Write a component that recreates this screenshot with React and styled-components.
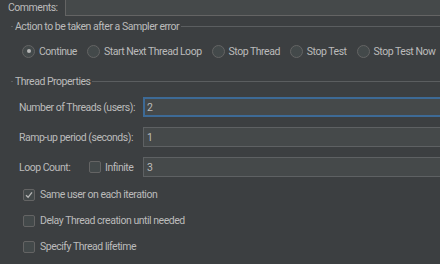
import React from "react";
import styled, { createGlobalStyle } from "styled-components";

const Global = createGlobalStyle`
  html, body { margin: 0; padding: 0; background: #3c3f41; }
  body {
    width: 440px;
    height: 264px;
    overflow: hidden;
    font-family: Roboto, "Noto Sans", sans-serif;
    font-size: 10.5px;
    letter-spacing: -0.48px;
    color: #bbbbbb;
  }
`;

const Page = styled.div`
  display: flex;
  flex-direction: column;
  width: 440px;
`;

const CommentsRow = styled.div`
  display: flex;
  align-items: center;
  height: 16px;
`;

const CommentsLabel = styled.span`
  width: 57px;
  padding-left: 8px;
  line-height: 14px;
`;

const CommentsBox = styled.div`
  flex: 1;
  align-self: flex-end;
  height: 17px;
  margin-top: -2px;
  background: #45494a;
  border: 1px solid #646464;
  border-right: none;
  box-sizing: border-box;
`;

const SectionHeader = styled.div`
  display: flex;
  align-items: center;
  height: 11px;
  margin-top: ${(p) => p.$top}px;
  padding-left: 11px;
`;

const Dash = styled.span`
  width: 2px;
  height: 1px;
  background: #5b5e60;
  margin-right: 2px;
`;

const SectionTitle = styled.span`
  line-height: 11px;
  white-space: nowrap;
  padding-right: 2px;
`;

const Line = styled.span`
  flex: 1;
  height: 1px;
  background: #5b5e60;
`;

const RadioRow = styled.div`
  display: flex;
  align-items: center;
  gap: 10px;
  height: 14px;
  margin-top: 12px;
  padding-left: 22px;
`;

const RadioItem = styled.label`
  display: flex;
  align-items: center;
  gap: 4px;
  white-space: nowrap;
`;

const RadioCircle = styled.span`
  width: 13px;
  height: 13px;
  box-sizing: border-box;
  border-radius: 50%;
  border: 1px solid #646464;
  background: #43494a;
  display: flex;
  align-items: center;
  justify-content: center;
  &::after {
    content: "";
    width: 4px;
    height: 4px;
    border-radius: 50%;
    background: ${(p) => (p.$checked ? "#b8b8b8" : "transparent")};
  }
`;

const Form = styled.div`
  display: flex;
  flex-direction: column;
  gap: 10px;
  margin-top: 10px;
  padding-left: 19px;
`;

const FormRow = styled.div`
  display: flex;
  align-items: center;
  height: 20px;
`;

const FieldLabel = styled.span`
  width: 124px;
  white-space: nowrap;
`;

const LoopLabel = styled.span`
  width: 70px;
  white-space: nowrap;
`;

const InlineCheck = styled.label`
  display: flex;
  align-items: center;
  gap: 4px;
  width: 54px;
`;

const Input = styled.div`
  flex: 1;
  height: 20px;
  box-sizing: border-box;
  background: #45494a;
  border: ${(p) => (p.$focused ? "2px solid #3d6a96" : "1px solid #5e6163")};
  border-right: none;
  padding-left: ${(p) => (p.$focused ? 2 : 3)}px;
  display: flex;
  align-items: center;
`;

const CheckList = styled.div`
  display: flex;
  flex-direction: column;
  gap: 13px;
  margin-top: 11px;
  padding-left: 23px;
`;

const CheckItem = styled.label`
  display: flex;
  align-items: center;
  gap: 5px;
  height: 13px;
`;

const Box = styled.span`
  width: 12px;
  height: 12px;
  box-sizing: border-box;
  border: 1px solid #646464;
  border-radius: 2px;
  background: #43494a;
  display: flex;
  align-items: center;
  justify-content: center;
`;

const Check = () => (
  <svg width="8" height="8" viewBox="0 0 8 8">
    <path d="M1 4.2 L3.1 6.3 L7 1.3" fill="none" stroke="#b8b8b8" strokeWidth="1.3" />
  </svg>
);

const Radio = ({ checked, children }) => (
  <RadioItem>
    <RadioCircle $checked={checked} />
    {children}
  </RadioItem>
);

const CheckBox = ({ checked }) => <Box>{checked && <Check />}</Box>;

export default function App() {
  return (
    <Page>
      <Global />
      <CommentsRow>
        <CommentsLabel>Comments:</CommentsLabel>
        <CommentsBox />
      </CommentsRow>

      <SectionHeader $top={5}>
        <Dash />
        <SectionTitle>Action to be taken after a Sampler error</SectionTitle>
        <Line />
      </SectionHeader>
      <RadioRow>
        <Radio checked>Continue</Radio>
        <Radio>Start Next Thread Loop</Radio>
        <Radio>Stop Thread</Radio>
        <Radio>Stop Test</Radio>
        <Radio>Stop Test Now</Radio>
      </RadioRow>

      <SectionHeader $top={18}>
        <Dash />
        <SectionTitle>Thread Properties</SectionTitle>
        <Line />
      </SectionHeader>

      <Form>
        <FormRow>
          <FieldLabel>Number of Threads (users):</FieldLabel>
          <Input $focused>2</Input>
        </FormRow>
        <FormRow>
          <FieldLabel>Ramp-up period (seconds):</FieldLabel>
          <Input>1</Input>
        </FormRow>
        <FormRow>
          <LoopLabel>Loop Count:</LoopLabel>
          <InlineCheck>
            <CheckBox />
            Infinite
          </InlineCheck>
          <Input>3</Input>
        </FormRow>
      </Form>

      <CheckList>
        <CheckItem>
          <CheckBox checked />
          Same user on each iteration
        </CheckItem>
        <CheckItem>
          <CheckBox />
          Delay Thread creation until needed
        </CheckItem>
        <CheckItem>
          <CheckBox />
          Specify Thread lifetime
        </CheckItem>
      </CheckList>
    </Page>
  );
}
